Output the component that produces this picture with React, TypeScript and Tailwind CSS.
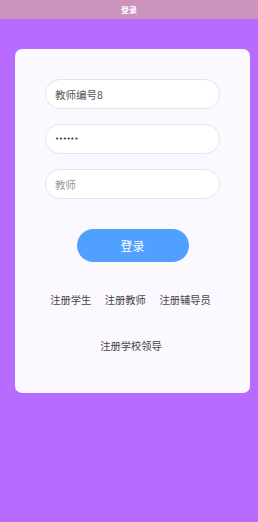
import React from "react";

export default function App() {
  const font = { fontFamily: '"Noto Sans CJK SC", "Noto Sans", sans-serif' };
  return (
    <div className="w-[258px] h-[522px] bg-[#b86bff] flex flex-col" style={font}>
      <div className="h-[19px] bg-[#cb94bd] flex items-center justify-center text-white text-[8px] font-bold">
        登录
      </div>
      <div className="mx-[15px] mt-[30px] w-[235px] h-[344px] bg-[#fbf8ff] rounded-[7px] px-[30px] pt-[30px] flex flex-col">
        <input
          readOnly
          defaultValue="教师编号8"
          className="h-[30px] w-full rounded-full border border-[#e6e3ea] bg-white pl-[9px] text-[10.5px] text-[#555] outline-none"
        />
        <input
          readOnly
          defaultValue="••••••"
          className="mt-[15px] h-[30px] w-full rounded-full border border-[#e6e3ea] bg-white pl-[9px] text-[7px] tracking-[-0.3px] text-[#333] outline-none"
          style={{ fontFamily: '"DejaVu Sans", sans-serif' }}
        />
        <input
          readOnly
          placeholder="教师"
          className="mt-[15px] h-[30px] w-full rounded-full border border-[#e6e3ea] bg-white pl-[9px] text-[10.5px] text-[#555] placeholder:text-[#999] outline-none"
        />
        <div className="mt-[30px] flex justify-center">
          <button className="h-[33px] w-[112px] rounded-full bg-[#4fa0ff] text-white text-[12px]">
            登录
          </button>
        </div>
        <div className="mt-[31px] flex justify-center gap-[13.5px] text-[10.25px] text-[#444] leading-[14px] -ml-[4px]">
          <span>注册学生</span>
          <span>注册教师</span>
          <span>注册辅导员</span>
        </div>
        <div className="mt-[32px] flex justify-center text-[10.25px] text-[#444] leading-[14px] -ml-[3px]">
          <span>注册学校领导</span>
        </div>
      </div>
    </div>
  );
}
